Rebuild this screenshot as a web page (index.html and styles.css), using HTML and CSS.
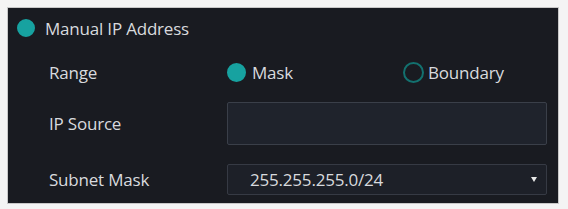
FILE: index.html
```html
<!DOCTYPE html>
<html lang="en">
    <head>
        <meta charset="UTF-8" />
        <title>Manual IP Address</title>
        <link rel="stylesheet" href="styles.css">
    </head>
    <body>
        <section class="panel">
            <div class="head">
                <span class="radio on"></span>
                <span class="head-text">Manual IP Address</span>
            </div>
            <div class="row range">
                <div class="label">Range</div>
                <div class="ctrl">
                    <label class="opt"><span class="radio on"></span>Mask</label>
                    <label class="opt"><span class="radio"></span>Boundary</label>
                </div>
            </div>
            <div class="row source">
                <div class="label">IP Source</div>
                <div class="ctrl"><div class="input"></div></div>
            </div>
            <div class="row subnet">
                <div class="label">Subnet Mask</div>
                <div class="ctrl">
                    <div class="select">
                        <span>255.255.255.0/24</span>
                        <span class="arrow"></span>
                    </div>
                </div>
            </div>
        </section>
    </body>
</html>
```
FILE: styles.css
```css
* {
    margin: 0;
    padding: 0;
    box-sizing: border-box;
}

body {
    background: #f4f4f4;
    font-family: "Open Sans", "Liberation Sans", sans-serif;
    font-size: 17px;
    letter-spacing: -0.2px;
    color: #d8dade;
}

.panel {
    width: 550px;
    height: 195px;
    margin: 8px;
    background: #191b21;
    box-shadow: 0 0 0 1px #c8c8c8;
    padding: 0 11px 8px 9px;
}

.head {
    height: 40px;
    display: flex;
    align-items: center;
}

.head .radio {
    width: 18px;
    height: 18px;
}

.head-text {
    margin-left: 10px;
}

.radio {
    display: inline-block;
    flex-shrink: 0;
    width: 16px;
    height: 16px;
    border-radius: 50%;
    border: 2px solid #168b8a;
}

.radio.on {
    background: #17a2a0;
    border-color: #17a2a0;
}

.row {
    display: flex;
    align-items: center;
}

.label {
    flex-shrink: 0;
    width: 210px;
    padding-left: 32px;
}

.ctrl {
    flex: 1;
    display: flex;
    align-items: center;
}

.range {
    height: 36px;
    margin-top: 6px;
}

.opt {
    display: flex;
    align-items: center;
}

.opt:first-child {
    width: 176px;
}

.opt .radio {
    width: 19px;
    height: 19px;
    margin-right: 6px;
}

.opt:last-child .radio {
    width: 21px;
    height: 21px;
    margin-right: 4px;
    border-color: #13716f;
}

.source {
    height: 43px;
    margin-top: 12px;
}

.input {
    width: 100%;
    height: 43px;
    background: #1f232c;
    border: 1px solid #3a3f49;
    border-radius: 2px;
}

.subnet {
    height: 31px;
    margin-top: 19px;
}

.select {
    width: 100%;
    height: 31px;
    background: #1d2028;
    border: 1px solid #363a44;
    border-radius: 2px;
    display: flex;
    align-items: center;
    justify-content: space-between;
    padding: 0 9px 0 22px;
}

.arrow {
    width: 0;
    height: 0;
    border-left: 3px solid transparent;
    border-right: 3px solid transparent;
    border-top: 5px solid #e8e8e8;
}
```
